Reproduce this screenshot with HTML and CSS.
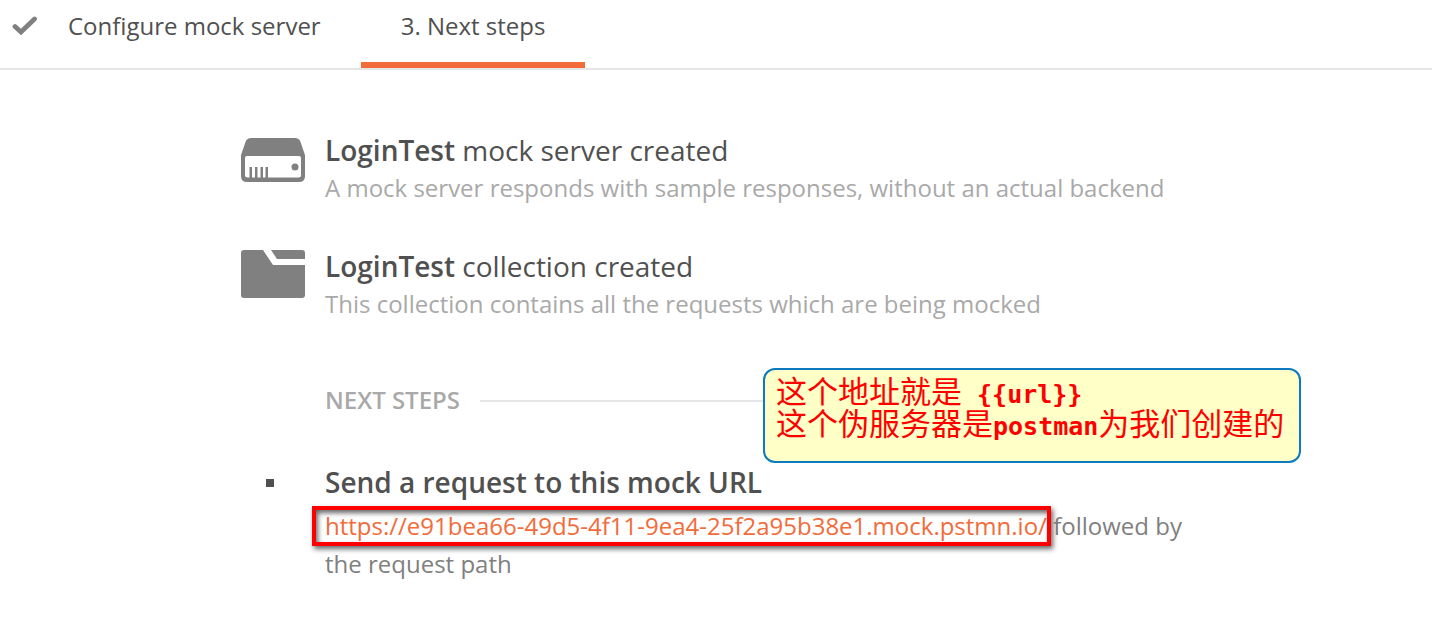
FILE: index.html
```html
<!DOCTYPE html>
<html lang="en">
<head>
<meta charset="utf-8">
<title>Mock server</title>
<link rel="stylesheet" href="styles.css">
</head>
<body>
<nav class="steps">
  <a class="step" href="#configure">
    <svg class="check" width="26" height="20" viewBox="0 0 26 20" aria-hidden="true"><path d="M3 10.500 9 16 22.500 3" fill="none" stroke="#808080" stroke-width="4.800" stroke-linecap="round"/></svg>
    <span>Configure mock server</span>
  </a>
  <a class="step active" href="#next" aria-current="step">3. Next steps</a>
</nav>
<main class="content">
  <section class="item">
    <svg class="icon" width="64" height="44" viewBox="0 0 64 44" aria-hidden="true">
      <path d="M10 0H54Q58 0 59.500 4L64 17V38Q64 44 58 44H6Q0 44 0 38V17L4.500 4Q6 0 10 0Z" fill="#808080"/>
      <path d="M6 18H58Q60 18 60 20V37Q60 39.500 57.500 39.500H6.500Q4 39.500 4 37V20Q4 18 6 18Z" fill="#fff"/>
      <path d="M8.500 29h2.500v11h-2.500zM14 29h2.500v11h-2.500zM19.500 29h2.500v11h-2.500zM24.500 29h2.500v11h-2.500z" fill="#808080"/>
      <circle cx="54" cy="29" r="3.500" fill="#808080"/>
    </svg>
    <div>
      <h2 class="title"><strong>LoginTest</strong> mock server created</h2>
      <p class="desc">A mock server responds with sample responses, without an actual backend</p>
    </div>
  </section>
  <section class="item">
    <svg class="icon folder" width="64" height="48" viewBox="0 0 64 48" aria-hidden="true">
      <path d="M3 0H22L32 15H64V45Q64 48 61 48H3Q0 48 0 45V3Q0 0 3 0ZM30 0H61Q64 0 64 3V9H36Z" fill="#808080"/>
    </svg>
    <div>
      <h2 class="title"><strong>LoginTest</strong> collection created</h2>
      <p class="desc">This collection contains all the requests which are being mocked</p>
    </div>
  </section>
  <section class="next" id="next">
    <div class="divider">
      <h3 class="divider-label">NEXT STEPS</h3>
    </div>
    <ul class="tasks">
      <li class="task">
        <h4 class="title task-title">Send a request to this mock URL</h4>
        <p class="task-text"><a class="url" href="#url">https://e91bea66-49d5-4f11-9ea4-25f2a95b38e1.mock.pstmn.io/</a> followed by the request path</p>
      </li>
    </ul>
    <aside class="callout" lang="zh-CN">
      <p>这个地址就是<span class="mono"> {{url}}</span></p>
      <p>这个伪服务器是<span class="mono">postman</span>为我们创建的</p>
    </aside>
  </section>
</main>
</body>
</html>
```
FILE: styles.css
```css
* {
  box-sizing: border-box;
}

body {
  margin: 0;
  background: #fff;
  color: #505050;
  font-family: "Open Sans", sans-serif;
  font-size: 24px;
  line-height: 38px;
}

h2, h3, h4, p, ul {
  margin: 0;
  padding: 0;
}

.steps {
  display: flex;
  border-bottom: 2px solid #e6e6e6;
}

.step {
  display: flex;
  align-items: center;
  padding: 7px 40px 17px;
  border-bottom: 6px solid transparent;
  color: #505050;
  text-decoration: none;
}

.step:first-child {
  gap: 30px;
  padding-left: 12px;
}

.step.active {
  border-bottom-color: #f26b3a;
}

.content {
  max-width: 950px;
  margin: 0 auto;
  padding-top: 61px;
}

.item {
  display: flex;
  align-items: flex-start;
  gap: 20px;
  margin-bottom: 40px;
}

.icon {
  flex: none;
  margin-top: 7px;
}

.folder {
  margin-top: 3px;
}

.title {
  font-size: 28px;
  font-weight: 400;
}

.title strong,
.task-title {
  font-weight: 600;
}

.desc {
  color: #a9a9a9;
}

.next {
  position: relative;
  margin-top: 58px;
  padding-left: 84px;
}

.divider {
  display: flex;
  align-items: center;
  gap: 20px;
}

.divider::after {
  content: "";
  flex: 1;
  height: 2px;
  margin-top: 2px;
  background: #e6e6e6;
}

.divider-label {
  color: #a9a9a9;
  font-size: 24px;
  font-weight: 600;
}

.tasks {
  margin-top: 44px;
  list-style: none;
}

.task {
  position: relative;
}

.task::before {
  content: "";
  position: absolute;
  top: 16px;
  left: -59px;
  width: 8px;
  height: 8px;
  background: #505050;
}

.task-text {
  margin-top: 6px;
  color: #808080;
}

.url {
  position: relative;
  color: #f26b3a;
  text-decoration: none;
}

.url::after {
  content: "";
  position: absolute;
  inset: -3px -4px -4px -13px;
  border: 4px solid #f00;
  box-shadow: 2px 3px 5px rgba(0, 0, 0, 0.6), inset 2px 3px 5px rgba(0, 0, 0, 0.6);
}

.callout {
  position: absolute;
  top: -13px;
  right: -110px;
  width: 538px;
  padding: 4px 11px 23px;
  border: 2px solid #0b7abf;
  border-radius: 12px;
  background: #ffffc8;
  color: #f00;
  font-family: "Noto Sans CJK SC", sans-serif;
  font-size: 31px;
  line-height: 32px;
  white-space: nowrap;
}

.mono {
  font-family: "DejaVu Sans Mono", monospace;
  font-size: 25px;
  font-weight: 700;
  line-height: 20px;
  white-space: pre;
}
```
